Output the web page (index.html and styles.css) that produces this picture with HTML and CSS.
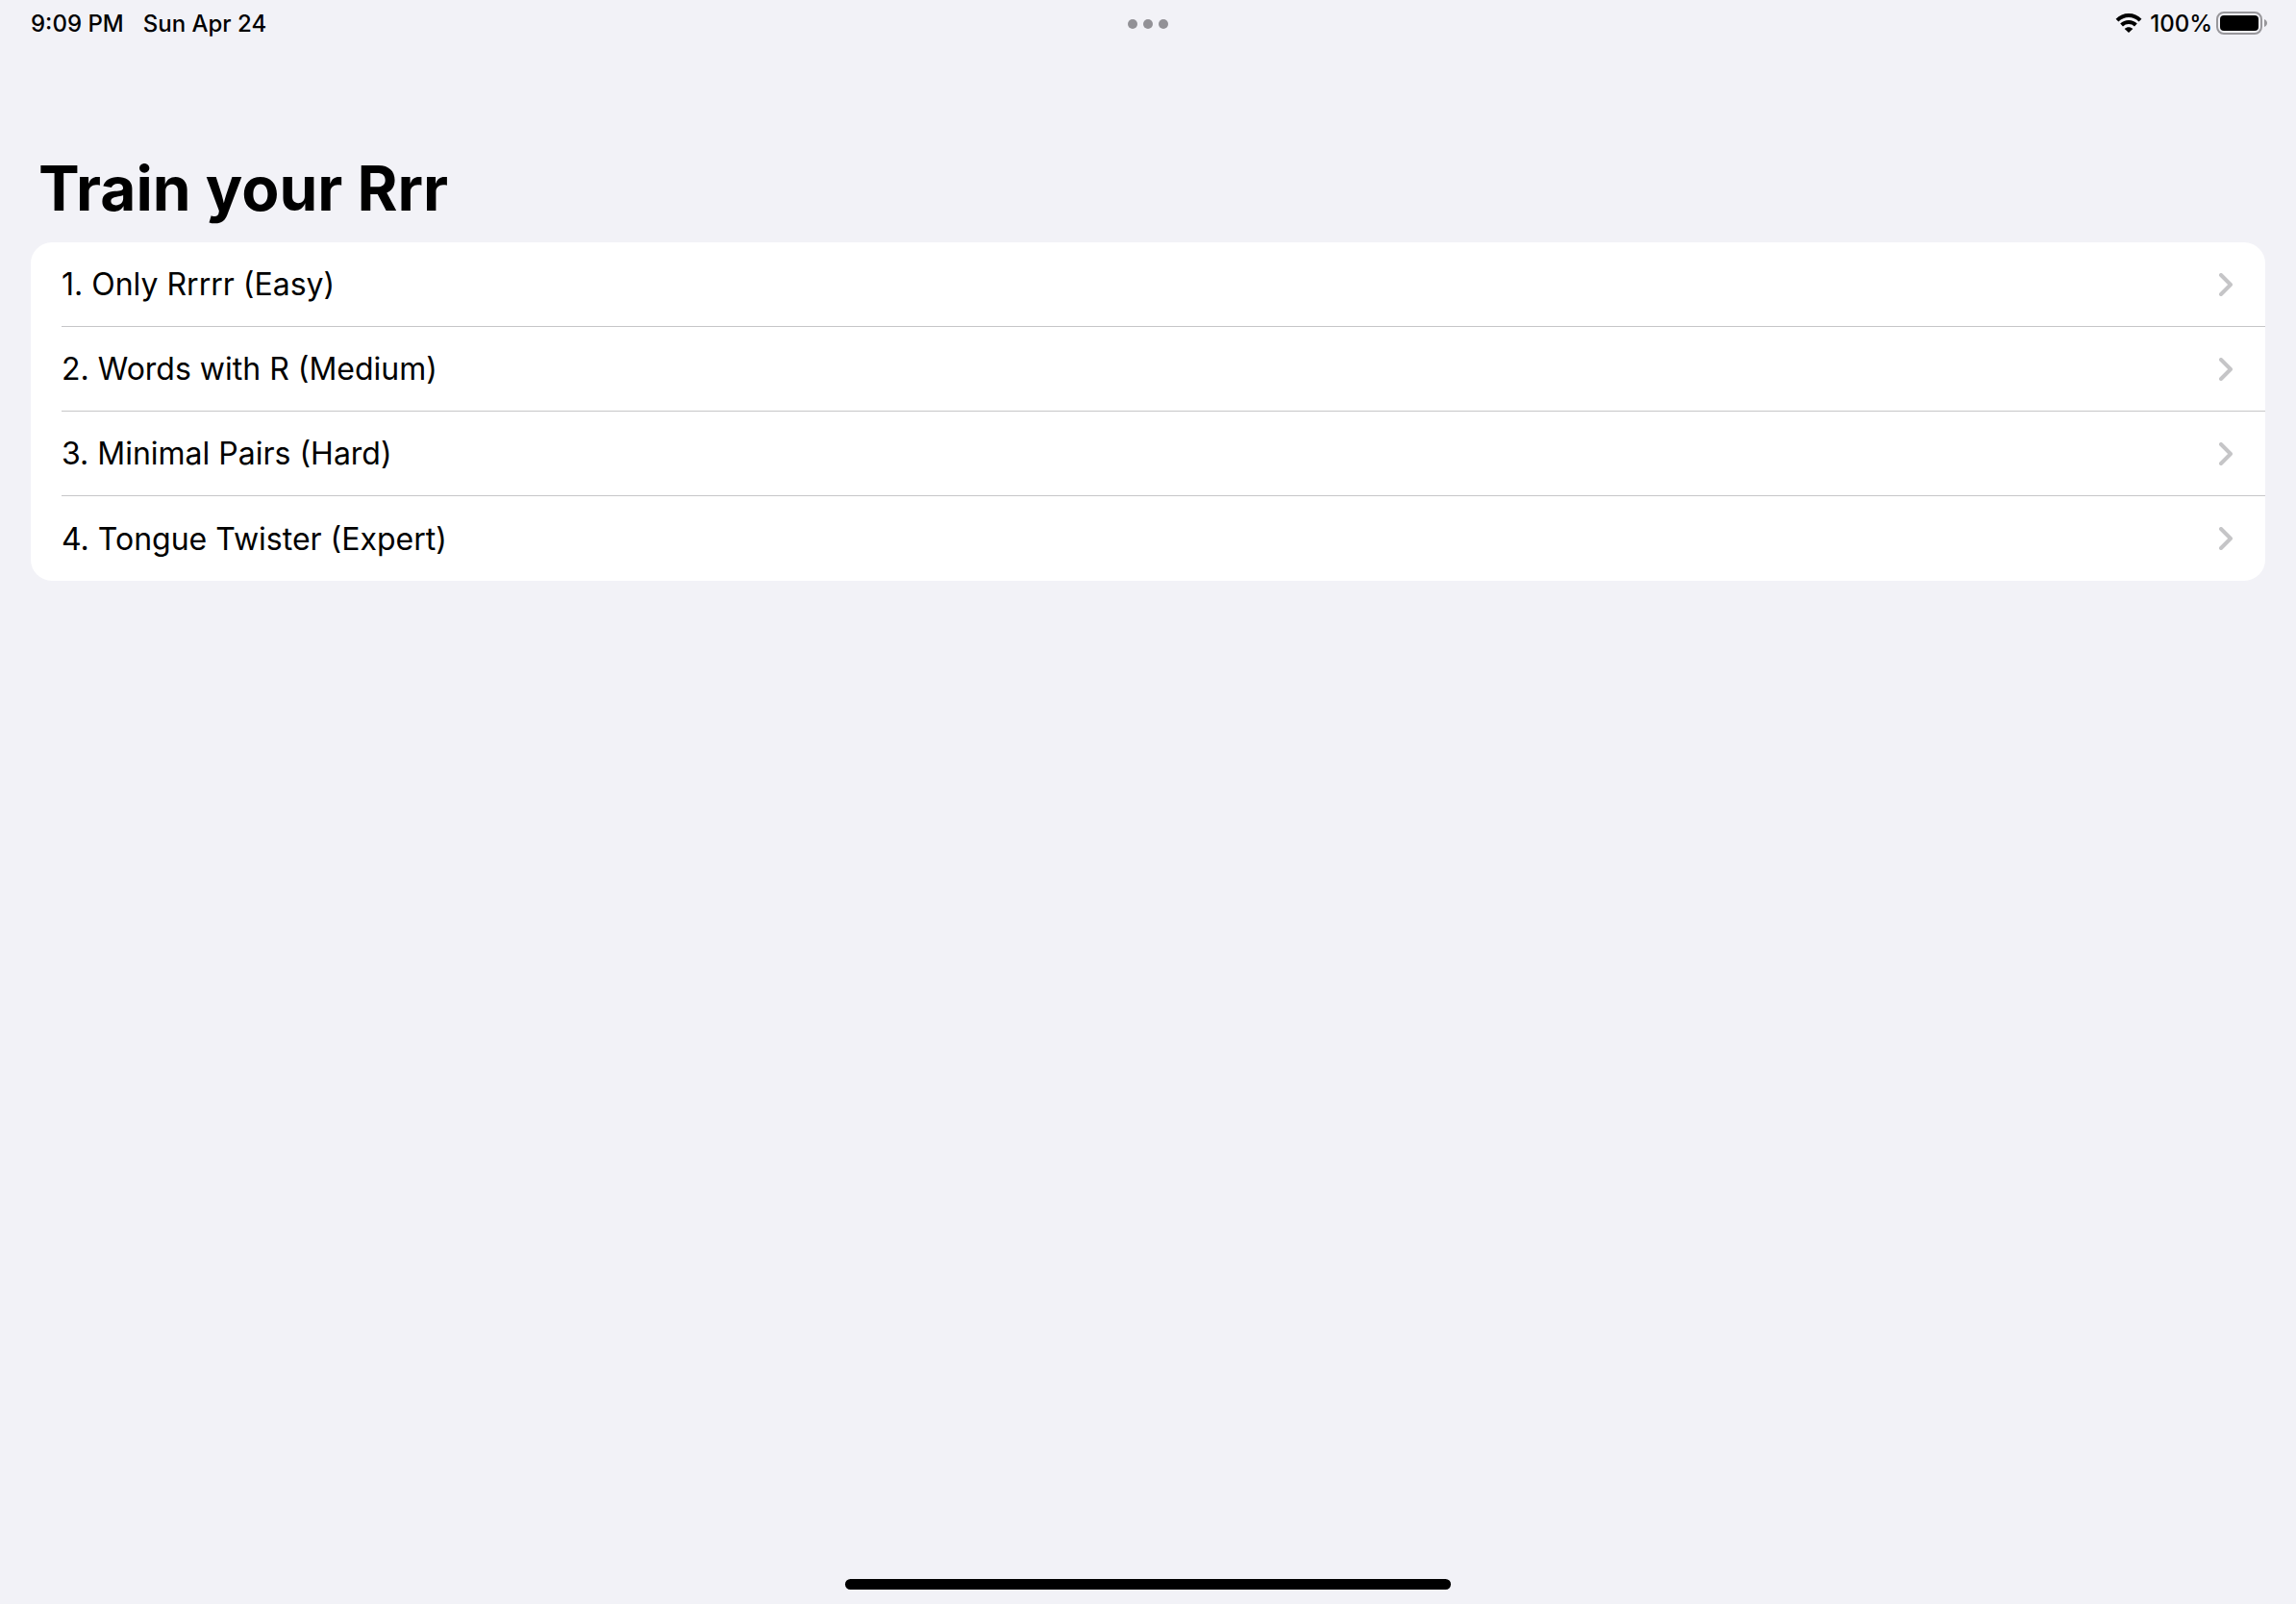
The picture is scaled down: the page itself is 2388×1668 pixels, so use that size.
FILE: index.html
```html
<!DOCTYPE html>
<html lang="en">
<head>
<meta charset="utf-8">
<meta name="viewport" content="width=device-width, initial-scale=1">
<title>Train your Rrr</title>
<link rel="stylesheet" href="styles.css">
</head>
<body>
<svg class="sprite" aria-hidden="true">
  <symbol id="chevron" viewBox="0 0 14 24"><path d="M2 2 12 12 2 22" fill="none" stroke="currentColor" stroke-width="4" stroke-linecap="round" stroke-linejoin="round"/></symbol>
</svg>
<header class="status">
  <div class="status-left"><time>9:09 PM</time><span>Sun Apr 24</span></div>
  <button class="multitask" type="button" aria-label="Multitasking"><i class="dot"></i><i class="dot"></i><i class="dot"></i></button>
  <div class="status-right">
    <svg class="wifi" viewBox="0 0 28 20" role="img" aria-label="Wi-Fi">
      <path d="M2 7.2C8.7 .4 19.3 .4 26 7.2" fill="none" stroke="#000" stroke-width="4"/>
      <path d="M6.6 12C10.7 8 17.300 8 21.400 12" fill="none" stroke="#000" stroke-width="4"/>
      <path d="M14 20 9.700 15.900C12.100 13.700 15.900 13.700 18.300 15.900Z"/>
    </svg>
    <span class="percent">100%</span>
    <svg class="battery" viewBox="0 0 53 24" role="img" aria-label="Battery full">
      <rect x="1" y="1" width="46" height="22" rx="7" fill="none" stroke="#98979b" stroke-width="2"/>
      <rect x="4" y="4" width="40" height="16" rx="4"/>
      <path d="M50 8C54 9.500 54 14.500 50 16Z" fill="#98979b"/>
    </svg>
  </div>
</header>
<main class="page">
  <h1 class="title">Train your Rrr</h1>
  <nav class="list" aria-label="Exercises">
    <a class="row" href="#only-r"><span class="row-body">1. Only Rrrrr (Easy)<svg class="chevron" aria-hidden="true"><use href="#chevron"/></svg></span></a>
    <a class="row" href="#words"><span class="row-body">2. Words with R (Medium)<svg class="chevron" aria-hidden="true"><use href="#chevron"/></svg></span></a>
    <a class="row" href="#pairs"><span class="row-body">3. Minimal Pairs (Hard)<svg class="chevron" aria-hidden="true"><use href="#chevron"/></svg></span></a>
    <a class="row" href="#twister"><span class="row-body">4. Tongue Twister (Expert)<svg class="chevron" aria-hidden="true"><use href="#chevron"/></svg></span></a>
  </nav>
</main>
<footer class="home"><div class="home-bar"></div></footer>
</body>
</html>
```
FILE: styles.css
```css
* { box-sizing: border-box; }
body {
  margin: 0;
  min-height: 100vh;
  display: flex;
  flex-direction: column;
  background: #f2f2f7;
  color: #000;
  font-family: Inter, "Liberation Sans", sans-serif;
}
.sprite { display: none; }
.status {
  display: grid;
  grid-template-columns: 1fr auto 1fr;
  align-items: center;
  height: 48px;
  padding: 0 30px;
  font-size: 24px;
  font-weight: 500;
}
.status-left { display: flex; gap: 20px; padding-left: 2px; }
.status-right { display: flex; align-items: center; justify-content: flex-end; }
.multitask {
  display: flex;
  gap: 6px;
  padding: 2px 0 0;
  border: 0;
  background: none;
}
.dot { width: 10px; height: 10px; border-radius: 50%; background: #929196; }
.wifi { width: 28px; height: 20px; margin-right: 8px; }
.percent { margin-right: 4px; }
.battery { width: 53px; height: 24px; }
.page { flex: 1; padding: 108px 32px 32px; }
.title {
  margin: 0;
  padding: 0 8px 16px;
  font-size: 64px;
  line-height: 80px;
  font-weight: 700;
}
.list { border-radius: 22px; background: #fff; overflow: hidden; }
.row { display: block; padding-left: 32px; color: inherit; text-decoration: none; }
.row-body {
  display: flex;
  align-items: center;
  justify-content: space-between;
  height: 88px;
  padding-right: 34px;
  border-bottom: 1px solid #c6c6c8;
  font-size: 32px;
}
.row:last-child .row-body { border-bottom: 0; }
.chevron { width: 14px; height: 24px; color: #c5c5c7; }
.home { display: flex; justify-content: center; padding-bottom: 15px; }
.home-bar { width: 630px; height: 11px; border-radius: 6px; background: #000; }
```
